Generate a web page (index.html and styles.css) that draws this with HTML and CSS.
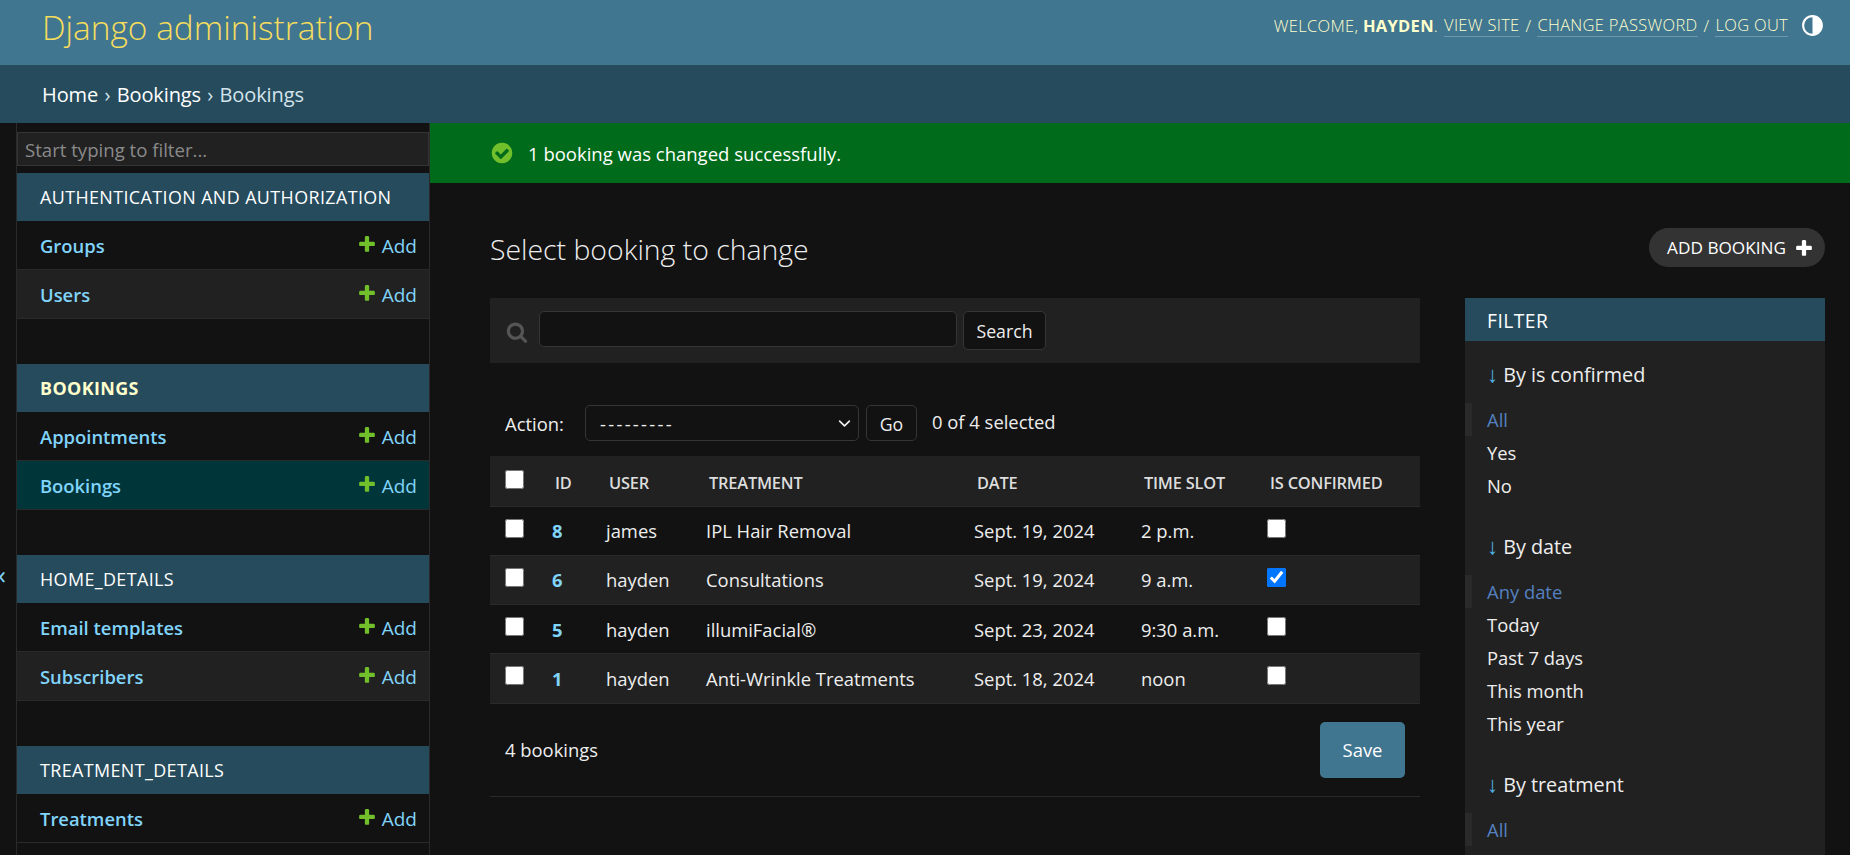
FILE: index.html
```html
<!DOCTYPE html>
<html lang="en">
<head>
  <meta charset="UTF-8">
  <title>Select booking to change | Django site admin</title>
  <link rel="stylesheet" href="styles.css">
</head>
<body>
  <header class="topbar">
    <div class="brand"><a href="#">Django administration</a></div>
    <div class="user-tools">
      <span>Welcome, <strong>hayden</strong>.</span>
      <a href="#">View site</a> /
      <a href="#">Change password</a> /
      <a href="#">Log out</a>
      <svg class="theme-icon" viewBox="0 0 24 24" width="25" height="25"><path fill="#fff" d="M12 22C6.477 22 2 17.523 2 12S6.477 2 12 2s10 4.477 10 10-4.477 10-10 10zm0-2V4a8 8 0 1 0 0 16z"/></svg>
    </div>
  </header>
  <div class="breadcrumbs"><a href="#">Home</a> › <a href="#">Bookings</a> › Bookings</div>

  <div class="app">
    <div class="toggle-nav">«</div>
    <nav class="sidebar">
      <input class="nav-filter" type="text" placeholder="Start typing to filter...">

      <div class="module">
        <div class="caption">Authentication and Authorization</div>
        <div class="nav-row"><a class="model" href="#">Groups</a><a class="add" href="#"><svg viewBox="0 0 1792 1792" width="20" height="20"><path fill="#70bf2b" d="M1600 796v192q0 40-28 68t-68 28h-416v416q0 40-28 68t-68 28h-192q-40 0-68-28t-28-68v-416h-416q-40 0-68-28t-28-68v-192q0-40 28-68t68-28h416v-416q0-40 28-68t68-28h192q40 0 68 28t28 68v416h416q40 0 68 28t28 68z"/></svg>Add</a></div>
        <div class="nav-row alt"><a class="model" href="#">Users</a><a class="add" href="#"><svg viewBox="0 0 1792 1792" width="20" height="20"><path fill="#70bf2b" d="M1600 796v192q0 40-28 68t-68 28h-416v416q0 40-28 68t-68 28h-192q-40 0-68-28t-28-68v-416h-416q-40 0-68-28t-28-68v-192q0-40 28-68t68-28h416v-416q0-40 28-68t68-28h192q40 0 68 28t28 68v416h416q40 0 68 28t28 68z"/></svg>Add</a></div>
      </div>

      <div class="module">
        <div class="caption current">Bookings</div>
        <div class="nav-row"><a class="model" href="#">Appointments</a><a class="add" href="#"><svg viewBox="0 0 1792 1792" width="20" height="20"><path fill="#70bf2b" d="M1600 796v192q0 40-28 68t-68 28h-416v416q0 40-28 68t-68 28h-192q-40 0-68-28t-28-68v-416h-416q-40 0-68-28t-28-68v-192q0-40 28-68t68-28h416v-416q0-40 28-68t68-28h192q40 0 68 28t28 68v416h416q40 0 68 28t28 68z"/></svg>Add</a></div>
        <div class="nav-row selected"><a class="model" href="#">Bookings</a><a class="add" href="#"><svg viewBox="0 0 1792 1792" width="20" height="20"><path fill="#70bf2b" d="M1600 796v192q0 40-28 68t-68 28h-416v416q0 40-28 68t-68 28h-192q-40 0-68-28t-28-68v-416h-416q-40 0-68-28t-28-68v-192q0-40 28-68t68-28h416v-416q0-40 28-68t68-28h192q40 0 68 28t28 68v416h416q40 0 68 28t28 68z"/></svg>Add</a></div>
      </div>

      <div class="module">
        <div class="caption">Home_Details</div>
        <div class="nav-row"><a class="model" href="#">Email templates</a><a class="add" href="#"><svg viewBox="0 0 1792 1792" width="20" height="20"><path fill="#70bf2b" d="M1600 796v192q0 40-28 68t-68 28h-416v416q0 40-28 68t-68 28h-192q-40 0-68-28t-28-68v-416h-416q-40 0-68-28t-28-68v-192q0-40 28-68t68-28h416v-416q0-40 28-68t68-28h192q40 0 68 28t28 68v416h416q40 0 68 28t28 68z"/></svg>Add</a></div>
        <div class="nav-row alt"><a class="model" href="#">Subscribers</a><a class="add" href="#"><svg viewBox="0 0 1792 1792" width="20" height="20"><path fill="#70bf2b" d="M1600 796v192q0 40-28 68t-68 28h-416v416q0 40-28 68t-68 28h-192q-40 0-68-28t-28-68v-416h-416q-40 0-68-28t-28-68v-192q0-40 28-68t68-28h416v-416q0-40 28-68t68-28h192q40 0 68 28t28 68v416h416q40 0 68 28t28 68z"/></svg>Add</a></div>
      </div>

      <div class="module">
        <div class="caption">Treatment_Details</div>
        <div class="nav-row"><a class="model" href="#">Treatments</a><a class="add" href="#"><svg viewBox="0 0 1792 1792" width="20" height="20"><path fill="#70bf2b" d="M1600 796v192q0 40-28 68t-68 28h-416v416q0 40-28 68t-68 28h-192q-40 0-68-28t-28-68v-416h-416q-40 0-68-28t-28-68v-192q0-40 28-68t68-28h416v-416q0-40 28-68t68-28h192q40 0 68 28t28 68v416h416q40 0 68 28t28 68z"/></svg>Add</a></div>
      </div>
    </nav>

    <main class="main">
      <div class="message">
        <svg viewBox="0 0 1792 1792" width="24" height="24"><path fill="#70bf2b" d="M1412 734q0-28-18-46l-91-90q-19-19-45-19t-45 19l-408 407-226-226q-19-19-45-19t-45 19l-91 90q-18 18-18 46 0 27 18 45l362 362q19 19 45 19 27 0 46-19l543-543q18-18 18-45zm252 162q0 209-103 385.500t-279.500 279.500-385.500 103-385.500-103-279.500-279.500-103-385.500 103-385.500 279.500-279.500 385.500-103 385.500 103 279.500 279.500 103 385.500z"/></svg>
        <span>1 booking was changed successfully.</span>
      </div>

      <div class="content">
        <div class="title-row">
          <h1>Select booking to change</h1>
          <a class="add-object" href="#">Add booking<svg viewBox="0 0 1792 1792" width="20" height="20"><path fill="#fff" d="M1600 796v192q0 40-28 68t-68 28h-416v416q0 40-28 68t-68 28h-192q-40 0-68-28t-28-68v-416h-416q-40 0-68-28t-28-68v-192q0-40 28-68t68-28h416v-416q0-40 28-68t68-28h192q40 0 68 28t28 68v416h416q40 0 68 28t28 68z"/></svg></a>
        </div>

        <div class="changelist">
          <div class="results">
            <div class="toolbar">
              <svg class="search-icon" viewBox="0 0 1792 1792" width="22" height="22"><path fill="#555" d="M1216 832q0-185-131.500-316.500t-316.500-131.500-316.500 131.500-131.500 316.500 131.500 316.500 316.500 131.500 316.500-131.500 131.500-316.500zm512 832q0 52-38 90t-90 38q-54 0-90-38l-343-342q-179 124-399 124-143 0-273.500-55.500t-225-150-150-225-55.500-273.500 55.500-273.500 150-225 225-150 273.500-55.500 273.500 55.500 225 150 150 225 55.500 273.500q0 220-124 399l343 343q37 37 37 90z"/></svg>
              <input class="search-input" type="text">
              <button class="btn search-btn">Search</button>
            </div>

            <div class="actions">
              <label class="action-label">Action:</label>
              <select class="action-select"><option>---------</option></select>
              <button class="btn go-btn">Go</button>
              <span class="counter">0 of 4 selected</span>
            </div>

            <table class="result-table">
              <colgroup>
                <col class="c-check"><col class="c-id"><col class="c-user"><col class="c-treat"><col class="c-date"><col class="c-time"><col class="c-conf">
              </colgroup>
              <thead>
                <tr>
                  <th class="check"><input type="checkbox"></th>
                  <th>ID</th><th>User</th><th>Treatment</th><th>Date</th><th>Time slot</th><th>Is confirmed</th>
                </tr>
              </thead>
              <tbody>
                <tr>
                  <td class="check"><input type="checkbox"></td>
                  <td><a class="id-link" href="#">8</a></td><td>james</td><td>IPL Hair Removal</td><td>Sept. 19, 2024</td><td>2 p.m.</td>
                  <td class="check"><input type="checkbox"></td>
                </tr>
                <tr class="alt">
                  <td class="check"><input type="checkbox"></td>
                  <td><a class="id-link" href="#">6</a></td><td>hayden</td><td>Consultations</td><td>Sept. 19, 2024</td><td>9 a.m.</td>
                  <td class="check"><input type="checkbox" checked></td>
                </tr>
                <tr>
                  <td class="check"><input type="checkbox"></td>
                  <td><a class="id-link" href="#">5</a></td><td>hayden</td><td>illumiFacial®</td><td>Sept. 23, 2024</td><td>9:30 a.m.</td>
                  <td class="check"><input type="checkbox"></td>
                </tr>
                <tr class="alt">
                  <td class="check"><input type="checkbox"></td>
                  <td><a class="id-link" href="#">1</a></td><td>hayden</td><td>Anti-Wrinkle Treatments</td><td>Sept. 18, 2024</td><td>noon</td>
                  <td class="check"><input type="checkbox"></td>
                </tr>
              </tbody>
            </table>

            <div class="paginator">
              <span>4 bookings</span>
              <button class="save-btn">Save</button>
            </div>
          </div>

          <aside class="filter">
            <h2>Filter</h2>
            <h3><span class="arrow">↓</span> By is confirmed</h3>
            <ul>
              <li class="on">All</li>
              <li>Yes</li>
              <li>No</li>
            </ul>
            <h3><span class="arrow">↓</span> By date</h3>
            <ul>
              <li class="on">Any date</li>
              <li>Today</li>
              <li>Past 7 days</li>
              <li>This month</li>
              <li>This year</li>
            </ul>
            <h3><span class="arrow">↓</span> By treatment</h3>
            <ul>
              <li class="on">All</li>
            </ul>
          </aside>
        </div>
      </div>
    </main>
  </div>
</body>
</html>
```

FILE: styles.css
```css
* {
  box-sizing: border-box;
}
html, body {
  height: 100%;
}
body {
  margin: 0;
  overflow: hidden;
  background: #121212;
  color: #eee;
  font-family: "Open Sans", "Noto Sans", sans-serif;
  font-size: 18.4px;
}
a {
  text-decoration: none;
  color: inherit;
}

/* header */
.topbar {
  height: 65px;
  background: #417690;
  display: flex;
  justify-content: space-between;
  padding: 0 25px 0 42px;
}
.brand {
  font-size: 33.4px;
  font-weight: 300;
  line-height: 55px;
  color: #f5dd5d;
}
.user-tools {
  display: flex;
  align-items: center;
  gap: 6px;
  height: 50px;
  color: #ffc;
  font-size: 16.5px;
  font-weight: 300;
  letter-spacing: 0.3px;
  text-transform: uppercase;
}
.user-tools strong {
  font-weight: 700;
}
.user-tools a {
  border-bottom: 1px solid rgba(255, 255, 255, 0.25);
}
.theme-icon {
  margin-left: 6px;
}
.breadcrumbs {
  height: 58px;
  line-height: 60px;
  padding-left: 42px;
  background: #264b5d;
  color: #d3e4ec;
  font-size: 20px;
  font-weight: 400;
  letter-spacing: -0.1px;
  word-spacing: 1.2px;
}
.breadcrumbs a {
  color: #fff;
}

/* layout */
.app {
  display: flex;
  height: 732px;
}
.toggle-nav {
  width: 16px;
  flex: none;
  display: flex;
  align-items: center;
  padding: 180px 0 10px;
  color: #81d4fa;
  font-size: 26px;
  overflow: hidden;
  text-indent: -7px;
}
.sidebar {
  width: 414px;
  flex: none;
  border-left: 1px solid #2a2a2a;
  border-right: 1px solid #2a2a2a;
  padding-top: 9px;
}
.nav-filter {
  display: block;
  width: 100%;
  height: 34px;
  margin-bottom: 7px;
  padding: 0 7px;
  background: #212121;
  border: 1px solid #353535;
  color: #eee;
  font: inherit;
  font-size: 18.6px;
}
.nav-filter::placeholder {
  color: #8a8a8a;
}
.module {
  margin-bottom: 45px;
}
.caption {
  height: 48px;
  line-height: 48px;
  padding-left: 23px;
  background: #264b5d;
  color: #fff;
  font-size: 17.9px;
  letter-spacing: 0.4px;
  text-transform: uppercase;
}
.caption.current {
  font-weight: 700;
  color: #ffc;
}
.nav-row {
  height: 49px;
  display: flex;
  align-items: center;
  justify-content: space-between;
  padding: 0 12px 0 23px;
  border-bottom: 1px solid #2a2a2a;
}
.nav-row.alt {
  background: #212121;
}
.nav-row.selected {
  background: #00363a;
}
.model {
  color: #81d4fa;
  font-weight: 600;
}
.add {
  display: flex;
  align-items: center;
  gap: 5px;
  padding-top: 1px;
  color: #81d4fa;
  font-size: 19px;
}
.add svg {
  margin-top: -4px;
}

/* main column */
.main {
  flex: 1;
  min-width: 0;
}
.message {
  height: 60px;
  display: flex;
  align-items: center;
  gap: 14px;
  padding-left: 60px;
  background: #006b1b;
  color: #fff;
  font-size: 18.5px;
}
.content {
  padding: 45px 25px 0 60px;
}
.title-row {
  display: flex;
  justify-content: space-between;
  align-items: center;
  height: 39px;
  margin-bottom: 31px;
}
h1 {
  margin: 0;
  padding-top: 2px;
  font-size: 28.4px;
  font-weight: 300;
  color: #eee;
}
.add-object {
  display: flex;
  align-items: center;
  gap: 8px;
  height: 39px;
  padding: 0 11px 0 18px;
  border-radius: 20px;
  background: #333;
  color: #fff;
  font-size: 17.2px;
  text-transform: uppercase;
}
.changelist {
  display: flex;
  gap: 45px;
}
.results {
  width: 930px;
  flex: none;
}
.toolbar {
  height: 65px;
  display: flex;
  align-items: flex-start;
  padding: 13px 16px;
  background: #212121;
}
.search-icon {
  margin: 10px 11px 0 0;
  flex: none;
}
.search-input {
  width: 418px;
  height: 36px;
  margin-right: 6px;
  background: #121212;
  border: 1px solid #353535;
  border-radius: 5px;
  color: #eee;
}
.btn {
  background: #121212;
  border: 1px solid #353535;
  border-radius: 5px;
  color: #eee;
  font: inherit;
  font-size: 17.7px;
  padding: 1px 0 0;
}
.search-btn {
  width: 83px;
  height: 39px;
}
.actions {
  display: flex;
  align-items: center;
  height: 36px;
  margin: 42px 0 15px;
  padding-left: 15px;
}
.action-label {
  width: 80px;
}
.action-select {
  appearance: none;
  width: 274px;
  height: 36px;
  padding-left: 14px;
  background: #121212 url("data:image/svg+xml,%3Csvg xmlns='http://www.w3.org/2000/svg' viewBox='0 0 16 16'%3E%3Cpath fill='none' stroke='%23eee' stroke-width='2' stroke-linecap='round' stroke-linejoin='round' d='M2 5l6 6 6-6'/%3E%3C/svg%3E") no-repeat right 7px center / 13px;
  border: 1px solid #353535;
  border-radius: 5px;
  color: #eee;
  font: inherit;
  letter-spacing: 2.3px;
}
.go-btn {
  width: 51px;
  height: 36px;
  margin-left: 7px;
}
.counter {
  margin: -4px 0 0 15px;
}
.result-table {
  width: 930px;
  table-layout: fixed;
  border-collapse: collapse;
}
.c-check { width: 47px; }
.c-id { width: 54px; }
.c-user { width: 100px; }
.c-treat { width: 268px; }
.c-date { width: 167px; }
.c-time { width: 126px; }
.c-conf { width: 168px; }
th {
  height: 50px;
  padding: 3px 0 0 18px;
  background: #212121;
  border-bottom: 1px solid #2a2a2a;
  color: #ddd;
  font-size: 16.4px;
  font-weight: 600;
  letter-spacing: -0.2px;
  text-align: left;
  text-transform: uppercase;
}
td {
  height: 49.25px;
  padding: 0 0 0 15px;
  border-bottom: 1px solid #2a2a2a;
}
tr.alt td {
  background: #212121;
}
th.check, td.check {
  padding-left: 15px;
  vertical-align: top;
}
th.check {
  padding-top: 14px;
}
td.check {
  padding-top: 12px;
}
input[type="checkbox"] {
  display: block;
  width: 19px;
  height: 19px;
  margin: 0;
}
.id-link {
  color: #81d4fa;
  font-weight: 700;
}
.paginator {
  display: flex;
  justify-content: space-between;
  align-items: center;
  padding: 18px 15px;
  border-bottom: 1px solid #2a2a2a;
}
.save-btn {
  width: 85px;
  height: 56px;
  background: #417690;
  border: none;
  border-radius: 5px;
  color: #fff;
  font: inherit;
}

/* filter panel */
.filter {
  width: 360px;
  flex: none;
  background: #212121;
  height: 560px;
}
.filter h2 {
  margin: 0 0 18px;
  height: 43px;
  line-height: 45px;
  padding-left: 22px;
  background: #264b5d;
  color: #fff;
  font-size: 19.2px;
  font-weight: 400;
  letter-spacing: 0.5px;
  text-transform: uppercase;
}
.filter h3 {
  margin: 0 0 13px;
  padding: 1px 0 0 22px;
  line-height: 30px;
  font-size: 19.8px;
  font-weight: 400;
  color: #eee;
}
.arrow {
  color: #4fb3e8;
  font-family: "Liberation Sans", sans-serif;
  font-size: 22px;
}
.filter ul {
  list-style: none;
  margin: 0 0 29px;
  padding: 0;
}
.filter li {
  height: 33px;
  line-height: 33px;
  padding-left: 15px;
  border-left: 7px solid transparent;
}
.filter li.on {
  color: #5580c0;
  border-left-color: #2a2a2a;
}
```
